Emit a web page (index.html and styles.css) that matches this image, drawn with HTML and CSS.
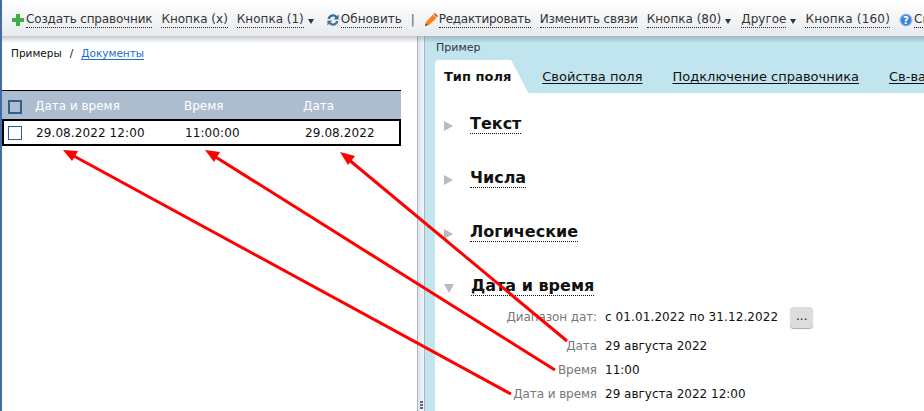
FILE: index.html
```html
<!DOCTYPE html>
<html lang="ru">
<head>
<meta charset="utf-8">
<title>Пример</title>
<link rel="stylesheet" href="styles.css">
</head>
<body>
<div class="app">
  <header class="toolbar">
    <span class="tool"><svg class="ico" viewBox="0 0 14 14"><path d="M5 1h4v4h4v4H9v4H5V9H1V5h4z" fill="#3fae49"/></svg><span class="lnk icoText tightSm">Создать справочник</span></span>
    <span class="tool"><span class="lnk">Кнопка (x)</span></span>
    <span class="tool"><span class="lnk">Кнопка (1)</span><span class="caret"></span></span>
    <span class="tool toolNudge3"><svg class="ico" viewBox="0 0 14 14"><path d="M1.500 6A5.500 5.500 0 0 1 11 3l1.600-1.600V6.500H7.500L9.300 4.700A3 3 0 0 0 4 6z" fill="#2f6f9f"/><path d="M12.500 8A5.500 5.500 0 0 1 3 11l-1.600 1.600V7.500H6.500L4.700 9.300A3 3 0 0 0 10 8z" fill="#52738f"/></svg><span class="lnk icoText">Обновить</span></span>
    <span class="sep">|</span>
    <span class="tool"><svg class="ico" viewBox="0 0 14 14"><path d="M1 13l1-4 7-7.500 3.500 3.500L5 12z" fill="#f58220"/><path d="M9.500 1l1.500-1 3 3-1 1.500z" fill="#e2502a"/><path d="M1 13l.7-2.800 2.100 2.100z" fill="#7a4a20"/></svg><span class="lnk icoText tight">Редактировать</span></span>
    <span class="tool"><span class="lnk tightSm">Изменить связи</span></span>
    <span class="tool"><span class="lnk">Кнопка (80)</span><span class="caret"></span></span>
    <span class="tool toolNudge1"><span class="lnk">Другое</span><span class="caret"></span></span>
    <span class="tool"><span class="lnk wide">Кнопка (160)</span></span>
    <span class="tool"><svg class="ico" viewBox="0 0 14 14"><circle cx="7" cy="7" r="6.500" fill="#8fbdea"/><circle cx="7" cy="7" r="5.200" fill="#3d86d6"/><text x="7" y="10.500" text-anchor="middle" class="helpMark">?</text></svg><span class="lnk icoText">Справка</span></span>
  </header>

  <main class="panes">
    <section class="left">
      <nav class="crumbs"><span>Примеры</span><span class="slash">/</span><a class="crumbLink" href="#">Документы</a></nav>
      <div class="grid">
        <div class="gridHead">
          <span class="box boxHead"></span>
          <span class="col colA">Дата и время</span>
          <span class="col colB">Время</span>
          <span class="col colC">Дата</span>
        </div>
        <div class="gridRow">
          <span class="box"></span>
          <span class="col colA">29.08.2022 12:00</span>
          <span class="col colB">11:00:00</span>
          <span class="col colC">29.08.2022</span>
        </div>
      </div>
    </section>

    <div class="splitter"><span class="grip"></span><span class="grip"></span><span class="grip"></span></div>

    <section class="right">
      <div class="rightTitle">Пример</div>
      <div class="tabs">
        <span class="tab active">Тип поля</span>
        <span class="tab">Свойства поля</span>
        <span class="tab">Подключение справочника</span>
        <span class="tab">Св-ва поля</span>
      </div>
      <div class="content">
        <div class="group"><span class="tri"></span><span class="groupName">Текст</span></div>
        <div class="group"><span class="tri"></span><span class="groupName">Числа</span></div>
        <div class="group"><span class="tri"></span><span class="groupName">Логические</span></div>
        <div class="group"><span class="tri open"></span><span class="groupName">Дата и время</span></div>
        <div class="fields">
          <div class="field fieldRange"><span class="fLabel">Диапазон дат:</span><span class="fValue">с 01.01.2022 по 31.12.2022</span><span class="more">...</span></div>
          <div class="field"><span class="fLabel">Дата</span><span class="fValue">29 августа 2022</span></div>
          <div class="field"><span class="fLabel">Время</span><span class="fValue">11:00</span></div>
          <div class="field"><span class="fLabel">Дата и время</span><span class="fValue">29 августа 2022 12:00</span></div>
        </div>
      </div>
    </section>
  </main>

  <svg class="arrows" viewBox="0 0 924 411" width="924" height="411">
    <g stroke="#ff0000" stroke-width="3" fill="none">
      <path d="M567 341L348 159"/>
      <path d="M555 370L214 156"/>
      <path d="M511 394L72 155"/>
    </g>
    <g fill="#ff0000">
      <path d="M340 152l15 4-7 9z"/>
      <path d="M205 150l15 2-6 10z"/>
      <path d="M63 150l15 1-6 10z"/>
    </g>
  </svg>
</div>
</body>
</html>
```

FILE: styles.css
```css
* { box-sizing: border-box; }
html, body { margin: 0; padding: 0; }
body {
  width: 924px;
  height: 411px;
  overflow: hidden;
  background: #fff;
  font-family: "DejaVu Sans", Verdana, sans-serif;
  font-size: 12px;
  color: #222;
}
.app {
  position: relative;
  width: 924px;
  height: 411px;
  overflow: hidden;
  display: flex;
  flex-direction: column;
  border-left: 2px solid #3f6da8;
}

/* toolbar */
.toolbar {
  position: relative;
  z-index: 2;
  flex: none;
  height: 36px;
  margin-left: -2px;
  padding: 4px 0 0 11px;
  display: flex;
  align-items: center;
  gap: 9px;
  white-space: nowrap;
  overflow: hidden;
  background: linear-gradient(#ffffff, #f6f7f9 40%, #e7eaee);
  font-size: 12px;
  color: #333;
}
.panes::before {
  content: "";
  position: absolute;
  left: 0;
  right: 0;
  top: 0;
  height: 7px;
  z-index: 1;
  background: linear-gradient(rgba(90,100,110,.35), rgba(90,100,110,0));
}
.tool { display: inline-flex; align-items: center; flex: none; }
.toolNudge3 { margin-left: 3px; }
.toolNudge1 { margin-left: 1px; }
.lnk {
  border-bottom: 1px dotted #222;
  line-height: 14px;
  padding-bottom: 1px;
}
.tight { letter-spacing: -.3px; }
.tightSm { letter-spacing: -.17px; }
.wide { letter-spacing: .2px; }
.ico { width: 14px; height: 14px; flex: none; }
.icoText { margin-left: 1px; }
.caret {
  width: 0;
  height: 0;
  margin-left: 4px;
  margin-top: 2px;
  border-left: 3px solid transparent;
  border-right: 3px solid transparent;
  border-top: 5px solid #333;
}
.sep { color: #555; }
.helpMark { font-size: 10px; font-weight: 700; fill: #fff; }

/* panes */
.panes {
  position: relative;
  flex: 1;
  min-height: 0;
  display: flex;
}
.left { flex: none; width: 415px; background: #fff; padding-top: 10px; }
.crumbs {
  display: flex;
  align-items: center;
  padding-left: 9px;
  font-size: 10.5px;
  height: 14px;
  color: #111;
}
.slash { margin: 0 8px; }
.crumbLink { color: #1a6fd0; text-decoration: none; border-bottom: 1px solid #1a6fd0; line-height: 12px; }
.grid { margin-top: 30px; width: 399px; }
.gridHead {
  height: 30px;
  display: flex;
  align-items: center;
  border-top: 1px solid #000;
  background: #aebccf;
  color: #fff;
  padding-left: 6px;
}
.gridRow {
  height: 27px;
  display: flex;
  align-items: center;
  border: 2px solid #000;
  padding-left: 4px;
  margin-top: -1px;
  color: #111;
  letter-spacing: .1px;
}
.box { flex: none; width: 14px; height: 14px; border: 1px solid #2f5f8f; background: #fff; }
.boxHead { background: transparent; border-width: 2px; margin-top: 3px; }
.col { flex: none; }
.gridHead .colA { margin-left: 13px; width: 149px; }
.gridHead .colB { width: 119px; }
.gridRow .colA { margin-left: 14px; width: 149px; }
.colB { width: 120px; }

/* splitter */
.splitter {
  flex: none;
  width: 8px;
  display: flex;
  flex-direction: column;
  justify-content: flex-end;
  align-items: center;
  gap: 1px;
  padding-bottom: 2px;
  border-left: 1px solid #a9b4c4;
  border-right: 1px solid #a9b4c4;
  background: linear-gradient(90deg, #dfe5ee, #f2f4f8);
}
.grip { width: 3px; height: 2px; background: #667; }

/* right */
.right {
  flex: 1;
  min-width: 0;
  background: #c1e5ef;
  padding-left: 10px;
  display: flex;
  flex-direction: column;
}
.rightTitle { height: 24px; padding-top: 5px; font-size: 11px; color: #334; margin-left: 1px; }
.tabs {
  flex: none;
  height: 33px;
  display: flex;
  align-items: center;
  gap: 30px;
  white-space: nowrap;
  overflow: hidden;
  font-size: 13px;
}
.tab { color: #111; text-decoration: underline; text-underline-offset: 2px; }
.tab.active {
  font-weight: 700;
  text-decoration: none;
  padding: 0 20px 0 9px;
  margin-right: -19px;
  align-self: stretch;
  display: flex;
  align-items: center;
  background: #fff;
  border-radius: 4px 6px 0 0;
  clip-path: polygon(0 0, 79% 0, 97% 100%, 0 100%);
}
.content { flex: 1; background: #fff; padding: 4px 0 0 9px; }
.group { display: flex; align-items: center; height: 54px; }
.tri {
  width: 0;
  height: 0;
  flex: none;
  margin-top: 4px;
  border-top: 5px solid transparent;
  border-bottom: 5px solid transparent;
  border-left: 9px solid #bbb;
}
.tri.open {
  border-left: 5px solid transparent;
  border-right: 5px solid transparent;
  border-top: 9px solid #bbb;
  border-bottom: 0;
}
.groupName {
  font-size: 16px;
  font-weight: 700;
  color: #111;
  line-height: 18px;
  border-bottom: 1px dotted #111;
  margin-left: 17px;
}
.fields { margin-top: -10px; }
.field { display: flex; align-items: center; height: 24px; font-size: 12px; }
.fieldRange { height: 31px; padding-bottom: 3px; }
.fLabel { width: 153px; text-align: right; color: #777; flex: none; letter-spacing: -.1px; }
.fValue { margin-left: 8px; color: #111; }
.fieldRange .fValue { letter-spacing: .1px; }
.more {
  margin-left: 12px;
  width: 23px;
  height: 21px;
  line-height: 18px;
  text-align: center;
  background: #dddddd;
  border-radius: 4px;
  box-shadow: 0 1px 1px #aaa;
}

/* annotation arrows over the screenshot */
.arrows {
  position: absolute;
  left: -2px;
  top: 0;
  z-index: 3;
  pointer-events: none;
}
```
